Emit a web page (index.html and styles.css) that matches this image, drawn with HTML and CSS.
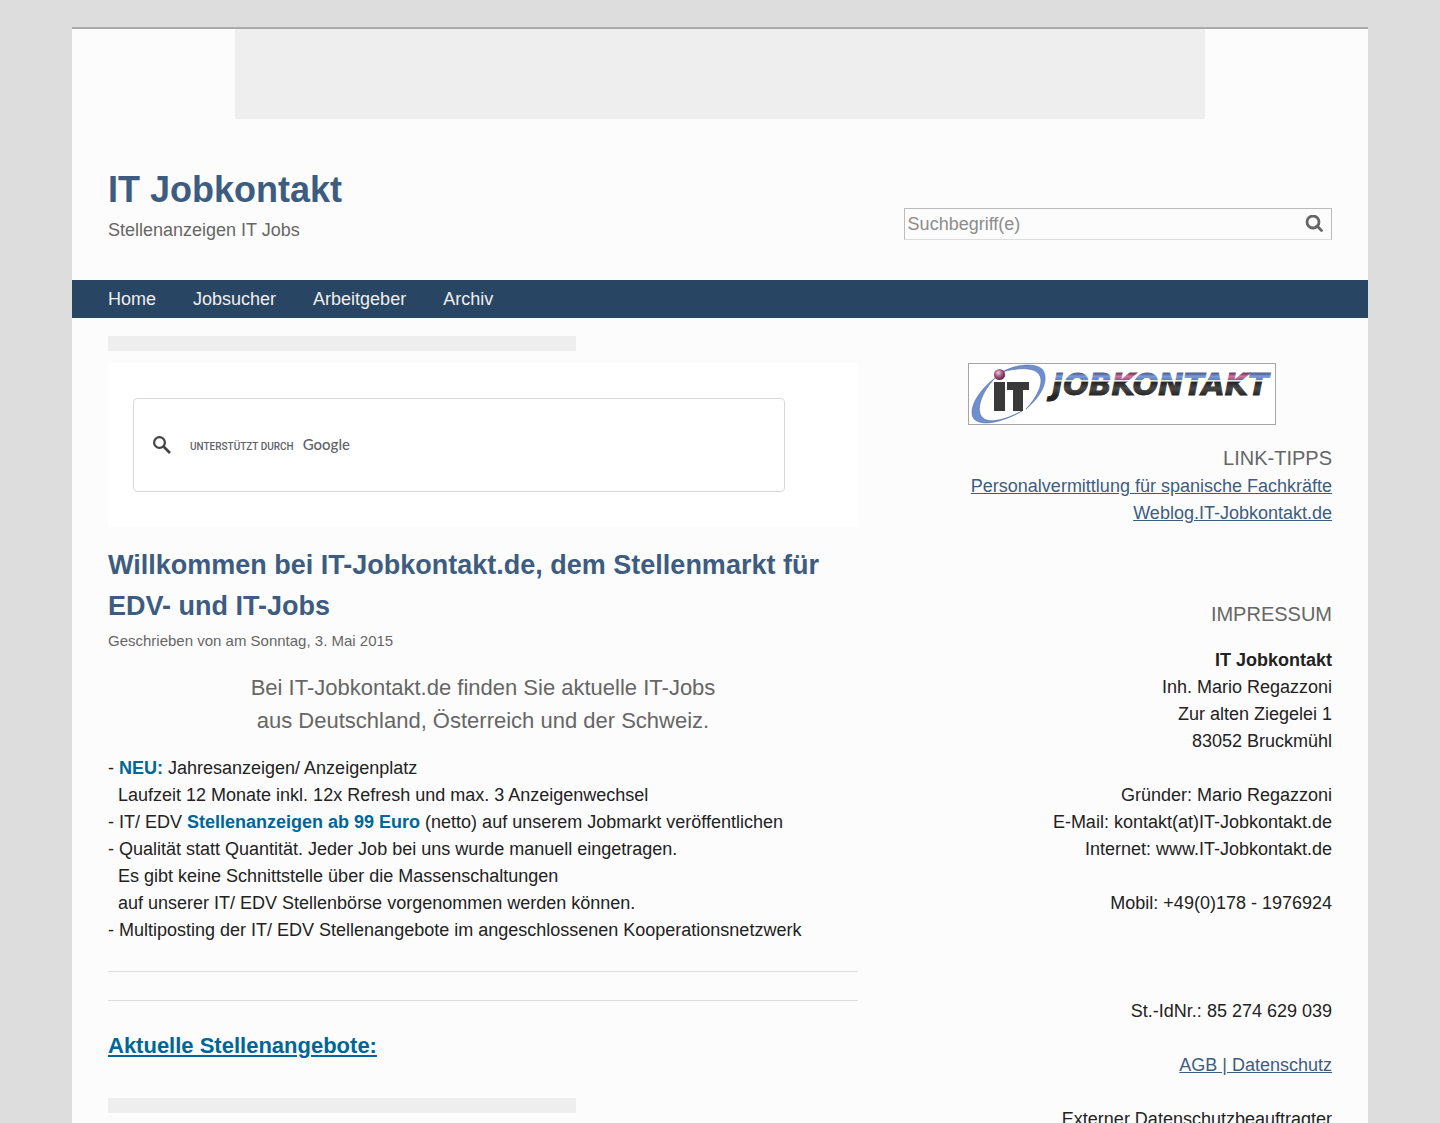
FILE: index.html
```html
<!DOCTYPE html>
<html lang="de">
<head>
<meta charset="utf-8">
<meta name="viewport" content="width=device-width, initial-scale=1">
<title>IT Jobkontakt</title>
<link rel="stylesheet" href="styles.css">
</head>
<body>
<div class="page">
  <div class="ad-banner"></div>
  <header class="header">
    <div>
      <h1 class="site-title">IT Jobkontakt</h1>
      <p class="tagline">Stellenanzeigen IT Jobs</p>
    </div>
    <form class="search" role="search">
      <input class="search-input" type="search" placeholder="Suchbegriff(e)" aria-label="Suchbegriff(e)">
      <button class="search-button" type="submit" aria-label="Suchen">
        <svg width="18" height="18" viewBox="0 0 18 18" fill="none" stroke="#666" stroke-width="2.800"><circle cx="8" cy="7" r="6"/><path d="M12 11l4.500 4.500" stroke-linecap="round"/></svg>
      </button>
    </form>
  </header>
  <nav class="nav">
    <a href="#">Home</a>
    <a href="#">Jobsucher</a>
    <a href="#">Arbeitgeber</a>
    <a href="#">Archiv</a>
  </nav>
  <div class="columns">
    <main>
      <div class="ad-strip"></div>
      <div class="google">
        <form class="google-form">
          <button class="google-button" type="submit" aria-label="Google-Suche">
            <svg width="18" height="18" viewBox="0 0 18 18" fill="none" stroke="#444" stroke-width="2.200"><circle cx="6.500" cy="6.500" r="5.400"/><path d="M10.500 10.500l6.500 6.500" stroke-width="2.600"/></svg>
          </button>
          <label class="google-label" for="q">UNTERSTÜTZT DURCH <span class="google-brand">Google</span></label>
          <input class="google-input" id="q" type="text">
        </form>
      </div>
      <article>
        <h2 class="title">Willkommen bei IT-Jobkontakt.de, dem Stellenmarkt für EDV- und IT-Jobs</h2>
        <p class="meta">Geschrieben von am Sonntag, 3. Mai 2015</p>
        <p class="intro">Bei IT-Jobkontakt.de finden Sie aktuelle IT-Jobs<br>aus Deutschland, Österreich und der Schweiz.</p>
        <p class="points">- <strong>NEU:</strong> Jahresanzeigen/ Anzeigenplatz<br>
        &nbsp; Laufzeit 12 Monate inkl. 12x Refresh und max. 3 Anzeigenwechsel<br>
        - IT/ EDV <strong>Stellenanzeigen ab 99 Euro</strong> (netto) auf unserem Jobmarkt veröffentlichen<br>
        - Qualität statt Quantität. Jeder Job bei uns wurde manuell eingetragen.<br>
        &nbsp; Es gibt keine Schnittstelle über die Massenschaltungen<br>
        &nbsp; auf unserer IT/ EDV Stellenbörse vorgenommen werden können.<br>
        - Multiposting der IT/ EDV Stellenangebote im angeschlossenen Kooperationsnetzwerk</p>
        <hr class="rule">
        <hr class="rule">
        <h3 class="offers">Aktuelle Stellenangebote:</h3>
      </article>
      <div class="ad-strip"></div>
    </main>
    <aside class="aside">
      <svg class="logo" width="308" height="62" viewBox="0 0 308 62" role="img" aria-label="IT Jobkontakt">
        <defs>
          <linearGradient id="blue" gradientUnits="userSpaceOnUse" x1="0" y1="11" x2="0" y2="33">
            <stop offset="0" stop-color="#56689b"/><stop offset=".1" stop-color="#7d9ad6"/><stop offset=".26" stop-color="#5c7fc6"/><stop offset=".29" stop-color="#e8e8ee"/><stop offset=".33" stop-color="#e8e8ee"/><stop offset=".36" stop-color="#222"/><stop offset=".65" stop-color="#484848"/><stop offset="1" stop-color="#222"/>
          </linearGradient>
          <linearGradient id="pink" gradientUnits="userSpaceOnUse" x1="0" y1="11" x2="0" y2="33">
            <stop offset="0" stop-color="#7c4664"/><stop offset=".1" stop-color="#c87aa4"/><stop offset=".26" stop-color="#a8507e"/><stop offset=".29" stop-color="#e8e8ee"/><stop offset=".33" stop-color="#e8e8ee"/><stop offset=".36" stop-color="#222"/><stop offset=".65" stop-color="#484848"/><stop offset="1" stop-color="#222"/>
          </linearGradient>
          <radialGradient id="ball" cx=".4" cy=".35" r=".65"><stop offset="0" stop-color="#eccbdc"/><stop offset=".5" stop-color="#a65a84"/><stop offset="1" stop-color="#5c2644"/></radialGradient>
        </defs>
        <rect x=".5" y=".5" width="307" height="61" fill="#fff" stroke="#a5a5a5"/>
        <path d="M34 9C46 2 66-1 74 6c8 10 0 27-16 40C71 32 77 17 70 10 64 4 48 5 34 9z" fill="#6d8fd0" stroke="#4d619b" stroke-width=".5"/>
        <path d="M27 15C11 27-1 46 6 56c9 9 33 1 48-8-15 8-32 13-39 7-8-7-2-25 12-40z" fill="#6d8fd0" stroke="#4d619b" stroke-width=".5"/>
        <path d="M26 19h11v29H26zM39 19h22v8h-6v21H45V27h-6z" fill="#393939"/>
        <circle cx="31.500" cy="11.500" r="5.600" fill="url(#ball)"/>
        <g class="logo-text">
          <text x="84" y="32" fill="url(#blue)" stroke="url(#blue)">JOB<tspan fill="url(#pink)" stroke="url(#pink)">K</tspan>ONTA<tspan fill="url(#pink)" stroke="url(#pink)">K</tspan>T</text>
        </g>
      </svg>
      <h4 class="aside-title">LINK-TIPPS</h4>
      <ul class="links">
        <li><a href="#">Personalvermittlung für spanische Fachkräfte</a></li>
        <li><a href="#">Weblog.IT-Jobkontakt.de</a></li>
      </ul>
      <h4 class="aside-title">IMPRESSUM</h4>
      <p class="imprint"><b>IT Jobkontakt</b><br>Inh. Mario Regazzoni<br>Zur alten Ziegelei 1<br>83052 Bruckmühl<br><br>
      Gründer: Mario Regazzoni<br>E-Mail: kontakt(at)IT-Jobkontakt.de<br>Internet: www.IT-Jobkontakt.de<br><br>
      Mobil: +49(0)178 - 1976924<br><br><br><br>
      St.-IdNr.: 85 274 629 039<br><br>
      <a href="#">AGB | Datenschutz</a><br><br>
      Externer Datenschutzbeauftragter</p>
    </aside>
  </div>
</div>
</body>
</html>
```
FILE: styles.css
```css
* { box-sizing: border-box; }
body {
  margin: 0;
  background: #ddd;
  color: #222;
  font: 18px/27px "Liberation Sans", Arial, sans-serif;
}
h1, h2, h3, h4, p, ul { margin: 0; padding: 0; }
a { color: #3d5c80; }
strong { color: #069; }
input, button {
  padding: 0;
  border: 0;
  background: none;
  font: inherit;
  outline: 0;
}
button { display: flex; cursor: pointer; }

.page {
  width: 90%;
  margin: 27px auto 0;
  border-top: 2px solid #aaa;
  background: #fcfcfc;
}
.ad-banner {
  max-width: 970px;
  height: 90px;
  margin: 0 auto;
  background: #eee;
}
.header {
  display: flex;
  justify-content: space-between;
  align-items: flex-end;
  padding: 44px 36px 36px;
}
.site-title {
  color: #3d5c80;
  font-size: 36px;
  line-height: 54px;
}
.tagline { color: #666; }
.search {
  display: flex;
  align-items: center;
  width: 35%;
  height: 32px;
  margin-bottom: 4px;
  padding: 0 8px 0 3px;
  border: 1px solid #bbb;
  border-bottom-color: #ddd;
}
.search-input { flex: 1; min-width: 0; }
.search-input::placeholder { color: #8c8c8c; }

.nav {
  display: flex;
  gap: 37px;
  padding: 0 36px;
  background: #284563;
  line-height: 38px;
}
.nav a { color: #eee; text-decoration: none; }

.columns {
  display: grid;
  grid-template-columns: 25fr 14fr;
  column-gap: 54px;
  padding: 18px 36px;
}
.ad-strip {
  max-width: 468px;
  height: 15px;
  background: #eee;
}
.google {
  margin: 12px 0 18px;
  padding: 35px 73px 35px 25px;
  background: #fff;
}
.google-form {
  display: flex;
  align-items: center;
  height: 94px;
  padding: 0 19px;
  border: 1px solid #d9d9d9;
  border-radius: 4px;
}
.google-label {
  display: flex;
  align-items: baseline;
  gap: 9px;
  margin-left: 19px;
  color: #5f6368;
  font: 500 10px/20px Roboto, sans-serif;
}
.google-brand { font: 500 15px/20px Lato, sans-serif; }
.google-input { flex: 1; min-width: 0; }

.title {
  color: #3d5c80;
  font-size: 27px;
  line-height: 41px;
}
.meta { color: #666; font-size: 15px; }
.intro {
  margin: 17px 0 18px;
  color: #666;
  font-size: 22px;
  line-height: 33px;
  text-align: center;
}
.rule {
  margin: 28px 0;
  border: 0;
  border-top: 1px solid #ddd;
}
.points + .rule { margin-top: 27px; }
.offers {
  margin-bottom: 35px;
  color: #069;
  font-size: 22px;
  line-height: 34px;
  text-decoration: underline;
}

.aside { padding-top: 27px; text-align: right; }
.logo { display: block; margin: 0 auto 18px; }
.logo-text {
  font: italic bold 30px "DejaVu Sans", sans-serif;
  stroke-width: 1px;
}
.aside-title {
  color: #666;
  font-size: 20px;
  font-weight: normal;
  line-height: 30px;
}
.links { margin-bottom: 72px; list-style: none; }
.imprint { margin-top: 18px; }
```
